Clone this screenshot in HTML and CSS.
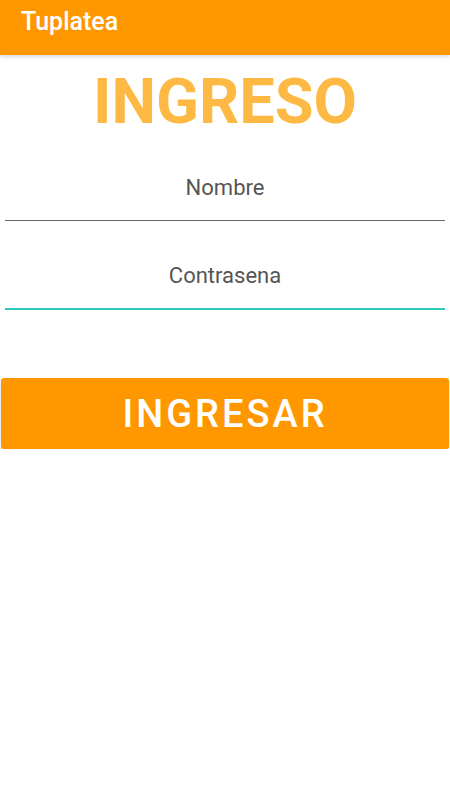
FILE: index.html
```html
<!DOCTYPE html>
<html lang="es">
<head>
    <meta charset="UTF-8">
    <meta name="viewport" content="width=device-width, initial-scale=1.0">
    <title>Tuplatea</title>
    <link rel="stylesheet" href="styles.css">
</head>
<body>
    <header class="app-bar">
        <span class="app-title">Tuplatea</span>
    </header>

    <main class="login">
        <h1 class="login-title">INGRESO</h1>

        <input class="field" type="text" placeholder="Nombre">
        <input class="field field-active" type="password" placeholder="Contrasena">

        <button class="login-button">INGRESAR</button>
    </main>
</body>
</html>
```

FILE: styles.css
```css
/* General */
body {
    margin: 0;
    font-family: Roboto, 'Liberation Sans', sans-serif;
    background-color: #fff;
}

/* App bar */
.app-bar {
    height: 55px;
    background-color: #ff9800;
    box-shadow: 0 2px 4px rgba(0, 0, 0, 0.15);
    display: flex;
    align-items: center;
    padding: 0 21px;
    box-sizing: border-box;
}

.app-title {
    color: #fff;
    font-size: 25px;
    font-weight: 500;
    margin-top: -12px;
}

/* Login form */
.login {
    display: flex;
    flex-direction: column;
}

.login-title {
    margin: 9px 0 0;
    text-align: center;
    font-size: 63px;
    font-weight: 700;
    line-height: 76px;
    color: #fdb944;
}

.field {
    margin: 15px 5px 0;
    border: none;
    border-bottom: 1px solid #666;
    padding: 0;
    height: 65px;
    font-family: inherit;
    font-size: 22px;
    text-align: center;
    color: #555;
    outline: none;
    background: transparent;
}

.field::placeholder {
    color: #555;
}

.field-active {
    margin-top: 22px;
    border-bottom: 2px solid #2ccabb;
}

.login-button {
    margin: 68px 1px 0;
    height: 71px;
    border: none;
    border-radius: 3px;
    background-color: #ff9800;
    box-shadow: 0 2px 3px rgba(0, 0, 0, 0.2);
    color: #fff;
    font-family: inherit;
    font-size: 38px;
    font-weight: 500;
    letter-spacing: 3px;
    cursor: pointer;
}
```
